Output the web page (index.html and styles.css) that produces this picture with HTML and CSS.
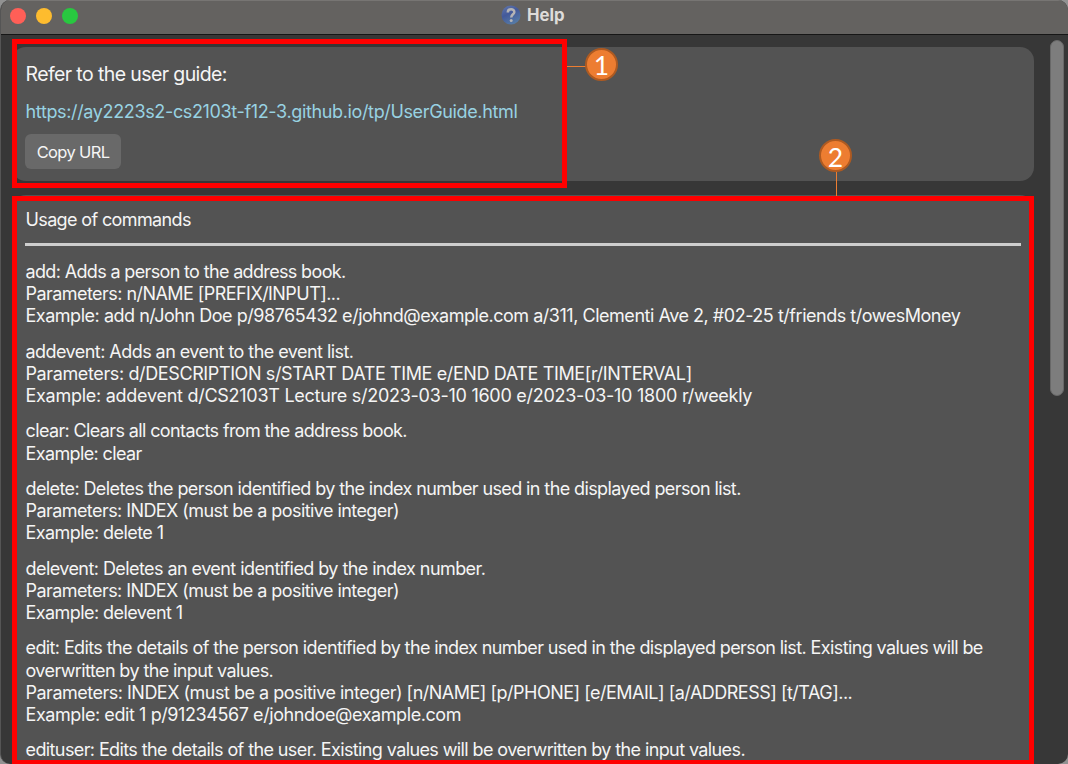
FILE: index.html
```
<!DOCTYPE html>
<html lang="en">
<head>
<meta charset="utf-8">
<title>Help</title>
<link rel="stylesheet" href="styles.css">
</head>
<body>
<div class="window">
  <header class="titlebar">
    <div class="lights"><i class="light red"></i><i class="light yellow"></i><i class="light green"></i></div>
    <div class="title">
      <svg class="help-icon" width="20" height="20" viewBox="0 0 20 20"><defs><linearGradient id="ball" x1="0" y1="0" x2="0.5" y2="1"><stop offset="0" stop-color="#6378ab"/><stop offset="0.5" stop-color="#43599a"/><stop offset="1" stop-color="#5579a5"/></linearGradient></defs><circle cx="10" cy="10" r="9.5" fill="url(#ball)"/><path d="M6.8 7.4C6.8 3.2 13.5 3.2 13.3 7.2C13.2 9.4 10.2 9.3 10.2 12.6" fill="none" stroke="#b5b4b5" stroke-width="2.5"/><circle cx="10.2" cy="15.4" r="1.5" fill="#b5b4b5"/></svg>
      <span>Help</span>
    </div>
  </header>
  <main class="content">
    <section class="card guide">
      <p class="refer">Refer to the user guide:</p>
      <a class="link">https://ay2223s2-cs2103t-f12-3.github.io/tp/UserGuide.html</a>
      <button class="copy">Copy URL</button>
    </section>
    <section class="card usage">
      <h2 class="heading">Usage of commands</h2>
      <div class="commands">
        <p><span class="tightest">add: Adds a person to the address book.</span><span class="snug">Parameters: n/NAME [PREFIX/INPUT]...</span><span class="regular">Example: add n/John Doe p/98765432 e/johnd@example.com a/311, Clementi Ave 2, #02-25 t/friends t/owesMoney</span></p>
        <p><span class="snug">addevent: Adds an event to the event list.</span><span class="loose">Parameters: d/DESCRIPTION s/START DATE TIME e/END DATE TIME[r/INTERVAL]</span><span class="loosest">Example: addevent d/CS2103T Lecture s/2023-03-10 1600 e/2023-03-10 1800 r/weekly</span></p>
        <p><span class="tighter">clear: Clears all contacts from the address book.</span><span class="tighter">Example: clear</span></p>
        <p><span class="tight">delete: Deletes the person identified by the index number used in the displayed person list.</span><span class="close">Parameters: INDEX (must be a positive integer)</span><span class="close">Example: delete 1</span></p>
        <p><span class="close">delevent: Deletes an event identified by the index number.</span><span class="close">Parameters: INDEX (must be a positive integer)</span><span class="close">Example: delevent 1</span></p>
        <p><span class="tight">edit: Edits the details of the person identified by the index number used in the displayed person list. Existing values will be</span><span class="tight">overwritten by the input values.</span><span class="medium">Parameters: INDEX (must be a positive integer) [n/NAME] [p/PHONE] [e/EMAIL] [a/ADDRESS] [t/TAG]...</span><span class="open">Example: edit 1 p/91234567 e/johndoe@example.com</span></p>
        <p><span class="tight">edituser: Edits the details of the user. Existing values will be overwritten by the input values.</span></p>
      </div>
    </section>
  </main>
  <div class="scrollbar"></div>
  <div class="outline outline-guide"></div>
  <div class="outline outline-usage"></div>
  <div class="leader leader-one"></div>
  <div class="leader leader-two"></div>
  <div class="badge badge-one">1</div>
  <div class="badge badge-two">2</div>
</div>
</body>
</html>
```
FILE: styles.css
```
* { box-sizing: border-box; }
body { margin: 0; background: #929292; font-family: Inter, sans-serif; color: #f5f5f5; }
p, h2 { margin: 0; font-weight: 400; }
.window { position: relative; width: 1068px; height: 764px; overflow: hidden; background: #373737; border-radius: 10px; border-left: 1px solid #555; }
.titlebar { position: relative; height: 35px; background: #646260; border-bottom: 1px solid #161616; border-top: 1px solid #777573; display: flex; align-items: center; }
.lights { display: flex; gap: 10px; padding-left: 8.5px; margin-top: -3px; }
.light { width: 16px; height: 16px; border-radius: 50%; }
.red { background: #ff5f57; }
.yellow { background: #febc2e; }
.green { background: #28c840; }
.title { position: absolute; left: 500px; top: 4px; display: flex; align-items: center; gap: 6px; font-size: 16.8px; line-height: 20px; font-weight: 700; color: #dedcda; }
.content { display: flex; flex-direction: column; gap: 14px; padding: 12px 34.5px 0 11px; }
.card { background: #535353; border-radius: 14px; padding-left: 13.5px; white-space: nowrap; }
.guide { height: 134px; display: flex; flex-direction: column; align-items: flex-start; padding-top: 15px; }
.refer { font-size: 19.5px; line-height: 24px; letter-spacing: -0.6px; }
.link { font-size: 18px; line-height: 24px; margin-top: 14px; color: #98d2e2; letter-spacing: -0.355px; }
.copy { margin: 10px 0 0 -0.5px; width: 96px; height: 35px; border: 0; border-radius: 6px; padding: 0; background: #696969; color: #f5f5f5; font: 16.5px Inter, sans-serif; letter-spacing: -0.65px; }
.usage { height: 600px; padding-right: 13px; padding-top: 13px; }
.heading { font-size: 18px; line-height: 24px; height: 38px; margin-left: -0.5px; padding-left: 0.5px; letter-spacing: -0.63px; border-bottom: 3px solid #cecece; }
.commands { padding-top: 15px; display: flex; flex-direction: column; gap: 13.1px; font-size: 18px; line-height: 22.2px; }
.commands span { display: block; width: max-content; }
.tightest { letter-spacing: -0.65px; }
.tighter { letter-spacing: -0.625px; }
.tight { letter-spacing: -0.605px; }
.close { letter-spacing: -0.567px; }
.snug { letter-spacing: -0.55px; }
.medium { letter-spacing: -0.5px; }
.regular { letter-spacing: -0.474px; }
.open { letter-spacing: -0.42px; }
.loose { letter-spacing: -0.38px; }
.loosest { letter-spacing: -0.27px; }
.scrollbar { position: absolute; left: 1049px; top: 40px; width: 14px; height: 356px; border-radius: 7px; background: #7d7d7d; border: 1px solid #686868; }
.outline { position: absolute; border: 5px solid #f00; }
.outline-guide { left: 11px; top: 39px; width: 555px; height: 149px; }
.outline-usage { left: 11px; top: 196px; width: 1022px; height: 569px; }
.leader { position: absolute; background: #ed7d31; }
.leader-one { left: 566px; top: 66px; width: 22px; height: 1px; }
.leader-two { left: 835px; top: 170px; width: 1px; height: 26px; }
.badge { position: absolute; width: 33px; height: 33px; border-radius: 50%; border: 2px solid #ae5a21; background: #ed7d31; color: #fff; font: 26.5px/31px Lato, sans-serif; text-align: center; }
.badge-one { left: 584px; top: 48px; }
.badge-two { left: 818px; top: 139px; line-height: 33px; }
```
